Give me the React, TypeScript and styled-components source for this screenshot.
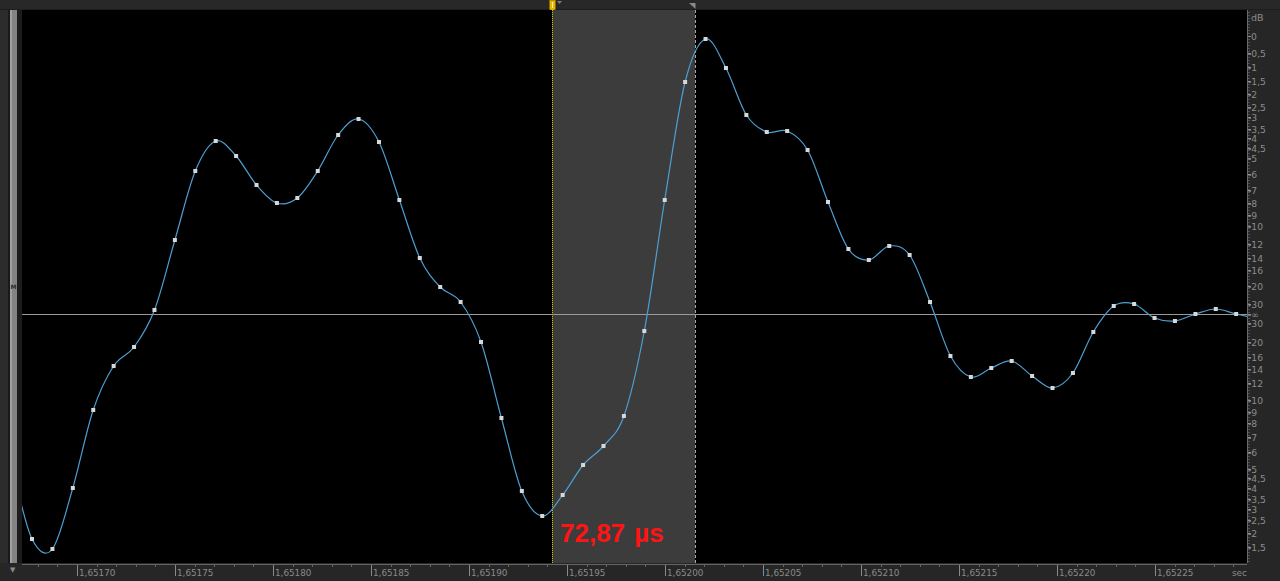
import styled, { createGlobalStyle } from "styled-components";

const GlobalStyle = createGlobalStyle`
  html, body {
    margin: 0;
    padding: 0;
    background: #262626;
    overflow: hidden;
  }
  #root {
    width: 1280px;
    height: 581px;
  }
`;

const Editor = styled.div`
  display: grid;
  grid-template-columns: 22px 1225px 33px;
  grid-template-rows: 10px 553px 18px;
  width: 1280px;
  height: 581px;
  background: #262626;
  font-family: "DejaVu Sans", "Liberation Sans", sans-serif;
`;

const TopBar = styled.div`
  grid-column: 1 / 4;
  position: relative;
  background: #282828;
  border-bottom: 1px solid #1d1d1d;
  box-sizing: border-box;
`;

const Marker = styled.svg<{ $left: number }>`
  position: absolute;
  top: 0;
  left: ${(p) => p.$left}px;
  overflow: visible;
`;

const Gutter = styled.div`
  display: flex;
  background: #2c2c2c;
`;

const ChannelBar = styled.div`
  display: flex;
  align-items: center;
  justify-content: center;
  width: 7px;
  margin-left: 8px;
  border-left: 2px solid #1a1a1a;
  border-right: 5px solid #1c1c1c;
  background: linear-gradient(90deg, #a0a0a0 0 2px, #838383 2px);
  color: #2a2a2a;
  font-size: 6px;
  font-weight: bold;
  line-height: 1;
`;

const CanvasWrap = styled.div`
  position: relative;
  background: #000;
  overflow: hidden;
`;

const Wave = styled.svg`
  display: block;
`;

const MeasureLabel = styled.span`
  position: absolute;
  left: 538px;
  top: 510px;
  font-family: "Liberation Sans", Arial, sans-serif;
  font-weight: bold;
  font-size: 26px;
  line-height: 26px;
  word-spacing: 2px;
  color: #ff1414;
  white-space: nowrap;
`;

const Scale = styled.svg`
  display: block;
  background: #262626;
`;

const Corner = styled.div`
  display: flex;
  justify-content: flex-start;
  padding: 4px 0 0 10px;
  box-sizing: border-box;
  color: #8a8a8a;
  font-size: 7px;
  line-height: 1;
`;

const TimeAxis = styled.svg`
  grid-column: 2 / 4;
  display: block;
`;

const X0 = 32;
const STEP = 20.41;

const samples = [
  539, 549, 488, 410, 366, 347, 310, 240, 171, 141, 156, 185, 203, 198, 171,
  135, 119, 142, 200, 258, 287, 302, 342, 418, 491, 516, 495, 465, 446, 416,
  331, 200, 82, 39, 68, 115, 132, 131, 150, 202, 249, 260, 246, 255, 302, 356,
  377, 368, 361, 376, 388, 373, 332, 306, 304, 318, 321, 314, 309, 314,
];

const dbMarks: [string, number][] = [
  ["0", 36], ["-0,5", 53], ["-1", 67], ["-1,5", 81], ["-2", 94],
  ["-2,5", 107], ["-3", 117], ["-3,5", 129], ["-4", 138], ["-4,5", 148],
  ["-5", 158], ["-6", 174], ["-7", 190], ["-8", 203], ["-9", 215],
  ["-10", 226], ["-12", 244], ["-14", 258], ["-16", 270], ["-20", 286],
  ["-30", 304], ["-\u221e", 314], ["-30", 323], ["-20", 342], ["-16", 357],
  ["-14", 369], ["-12", 383], ["-10", 400], ["-9", 412], ["-8", 423],
  ["-7", 437], ["-6", 452], ["-5", 469], ["-4,5", 478], ["-4", 488],
  ["-3,5", 499], ["-3", 509], ["-2,5", 520], ["-2", 533], ["-1,5", 547],
];

const timeLabels = [
  "1,65170", "1,65175", "1,65180", "1,65185", "1,65190", "1,65195",
  "1,65200", "1,65205", "1,65210", "1,65215", "1,65220", "1,65225",
];

function wavePath() {
  const ys = [430, 470, ...samples, 318, 320];
  const pts = ys.map((y, i) => [X0 + (i - 2) * STEP, y]);
  let d = `M${pts[1][0]},${pts[1][1]}`;
  for (let i = 1; i < pts.length - 2; i++) {
    const [x0, y0] = pts[i - 1];
    const [x1, y1] = pts[i];
    const [x2, y2] = pts[i + 1];
    const [x3, y3] = pts[i + 2];
    const c1x = x1 + (x2 - x0) / 6;
    const c1y = y1 + (y2 - y0) / 6;
    const c2x = x2 - (x3 - x1) / 6;
    const c2y = y2 - (y3 - y1) / 6;
    d += ` C${c1x.toFixed(1)},${c1y.toFixed(1)} ${c2x.toFixed(1)},${c2y.toFixed(1)} ${x2.toFixed(1)},${y2}`;
  }
  return d;
}

function Waveform() {
  return (
    <Wave width={1225} height={553} viewBox="22 10 1225 553">
      <rect x={552} y={10} width={143} height={553} fill="#3c3c3c" />
      <line x1={22} y1={314.5} x2={1247} y2={314.5} stroke="#9a9a9a" strokeWidth={1} />
      <line x1={552.5} y1={10} x2={552.5} y2={563} stroke="#c9c400" strokeWidth={1} strokeDasharray="1 1" />
      <line x1={695.5} y1={10} x2={695.5} y2={563} stroke="#a8a8a8" strokeWidth={1} strokeDasharray="3 2" />
      <path d={wavePath()} fill="none" stroke="#4d9fd3" strokeWidth={1.2} />
      {samples.map((y, i) => (
        <rect
          key={i}
          x={X0 + i * STEP - 2}
          y={y - 2}
          width={4}
          height={4}
          fill="#d8d8d8"
        />
      ))}
    </Wave>
  );
}

function DbScale() {
  const minor = [];
  for (let y = 12; y < 562; y += 3) minor.push(y);
  return (
    <Scale width={33} height={553} viewBox="1247 10 33 553">
      <line x1={1247.5} y1={10} x2={1247.5} y2={563} stroke="#6a6a6a" />
      {minor.map((y) => (
        <line key={y} x1={1248} y1={y + 0.5} x2={1250} y2={y + 0.5} stroke="#4e4e4e" />
      ))}
      <text x={1251} y={21} fill="#8c8c8c" fontSize={9.5} fontFamily="DejaVu Sans, sans-serif">
        dB
      </text>
      {dbMarks.map(([label, y], i) => (
        <g key={i}>
          <line x1={1248} y1={y + 0.5} x2={1251} y2={y + 0.5} stroke="#8c8c8c" />
          <text
            x={label.startsWith("-") ? 1248 : 1251}
            y={y + 3.5}
            fill="#8c8c8c"
            fontSize={9.2}
            fontFamily="DejaVu Sans, sans-serif"
          >
            {label}
          </text>
        </g>
      ))}
    </Scale>
  );
}

function TimeRuler() {
  const ticks = [];
  for (let x = 77 - 2 * 19.6; x < 1246; x += 19.6) ticks.push(x);
  return (
    <TimeAxis width={1258} height={18} viewBox="22 563 1258 18">
      <line x1={22} y1={564.5} x2={1247} y2={564.5} stroke="#666" />
      {ticks.map((x, i) => {
        const major = (i - 2) % 5 === 0 && i >= 2;
        const px = Math.round(x) + 0.5;
        return (
          <line
            key={i}
            x1={px}
            y1={565}
            x2={px}
            y2={major ? 576 : 567}
            stroke={major ? "#8a8a8a" : "#666"}
          />
        );
      })}
      {timeLabels.map((t, i) => (
        <text
          key={t}
          x={79 + i * 98}
          y={576}
          fill="#8a8a8a"
          fontSize={8.8}
          fontFamily="DejaVu Sans, sans-serif"
        >
          {t}
        </text>
      ))}
      <text x={1232} y={576} fill="#8a8a8a" fontSize={8.8} fontFamily="DejaVu Sans, sans-serif">
        sec
      </text>
    </TimeAxis>
  );
}

export default function App() {
  return (
    <>
      <GlobalStyle />
      <Editor>
        <TopBar>
          <Marker $left={549} width={8} height={13} viewBox="0 0 8 13">
            <path d="M0.5,0 H6.5 V9 L3.5,12 L0.5,9 Z" fill="#e8b400" stroke="#8a6a00" strokeWidth={1} />
            <line x1={3.5} y1={2} x2={3.5} y2={8} stroke="#fff3b0" strokeWidth={1} />
          </Marker>
          <Marker $left={557} width={5} height={5} viewBox="0 0 5 5">
            <path d="M0,1 H5 L2.5,4 Z" fill="#7a7a7a" />
          </Marker>
          <Marker $left={689} width={7} height={10} viewBox="0 0 7 10">
            <path d="M0,3 H6.5 V9 Z" fill="#8a8a8a" />
          </Marker>
        </TopBar>
        <Gutter>
          <ChannelBar>M</ChannelBar>
        </Gutter>
        <CanvasWrap>
          <Waveform />
          <MeasureLabel>72,87 µs</MeasureLabel>
        </CanvasWrap>
        <DbScale />
        <Corner>▼</Corner>
        <TimeRuler />
      </Editor>
    </>
  );
}
